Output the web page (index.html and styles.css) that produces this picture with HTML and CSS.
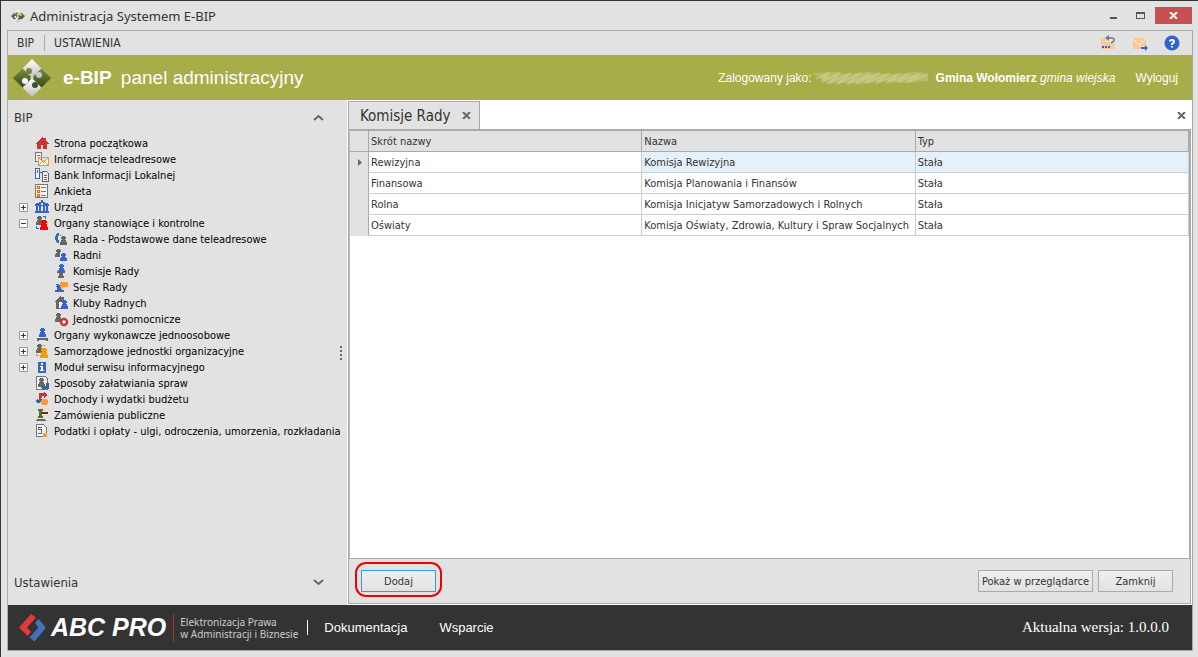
FILE: index.html
```html
<!DOCTYPE html>
<html lang="pl">
  <head>
    <meta charset="UTF-8" />
    <meta name="viewport" content="width=device-width, initial-scale=1.0" />
    <title>Administracja Systemem E-BIP</title>
    <link rel="stylesheet" href="styles.css">
  </head>
  <body>
    <!-- shared icon shapes -->
    <svg class="sprite" aria-hidden="true">
      <defs>
        <linearGradient id="g-silver" gradientUnits="userSpaceOnUse" x1="0" y1="0" x2="0" y2="19" spreadMethod="repeat">
          <stop offset="0" stop-color="#fff" />
          <stop offset="1" stop-color="#bdbdbd" />
        </linearGradient>
        <linearGradient id="g-olive" gradientUnits="userSpaceOnUse" x1="0" y1="9" x2="0" y2="29">
          <stop offset="0" stop-color="#7d8f45" />
          <stop offset="1" stop-color="#36451a" />
        </linearGradient>
      </defs>
      <symbol id="puzzle" viewBox="0 0 38 38">
        <path fill="url(#g-silver)" d="M19 0l9.500 9.500L9.500 28.500 19 38l9.500-9.500L9.500 9.500z" />
        <path fill="url(#g-olive)" d="M0 19l9.500-9.500 19 19L38 19l-9.500-9.500-19 19z" />
        <circle cx="16" cy="12" r="3" fill="url(#g-olive)" />
        <circle cx="26" cy="16" r="3" fill="url(#g-silver)" />
        <circle cx="22" cy="26" r="3" fill="url(#g-olive)" />
        <circle cx="12" cy="22" r="3" fill="url(#g-silver)" />
        <circle cx="19" cy="19" r="1.500" fill="#dcdcdc" />
      </symbol>
      <symbol id="pawn" viewBox="0 0 7 9">
        <path d="M2 0h3v1h1v2H5v1h1v2h1v3H0V6h1V4h1V3H1V1h1z" />
      </symbol>
      <symbol id="close" viewBox="0 0 9 7">
        <path fill="none" stroke="currentColor" stroke-width="2" d="M1 0l7 7M8 0L1 7" />
      </symbol>
    </svg>

    <div class="b-window">
      <header class="b-titlebar">
        <svg class="b-titlebar__icon"><use href="#puzzle" /></svg>
        <span class="b-titlebar__text">Administracja Systemem E-BIP</span>
        <button class="b-titlebar__button" type="button" aria-label="Minimalizuj">
          <svg width="7" height="9" viewBox="0 0 7 9"><path fill="#555" d="M0 6h7v2H0z" /></svg>
        </button>
        <button class="b-titlebar__button" type="button" aria-label="Maksymalizuj">
          <svg width="9" height="7" viewBox="0 0 9 7"><path fill="#555" fill-rule="evenodd" d="M0 0h9v7H0zM1 2v4h7V2z" /></svg>
        </button>
        <button class="b-titlebar__button b-titlebar__button_close" type="button" aria-label="Zamknij okno">
          <svg width="9" height="7"><use href="#close" /></svg>
        </button>
      </header>

      <div class="b-frame">
        <nav class="b-menu">
          <a class="b-menu__link" href="#">BIP</a>
          <a class="b-menu__link" href="#">USTAWIENIA</a>
          <div class="b-menu__tools">
            <button class="b-menu__tool" type="button" aria-label="Cofnij">
              <svg width="16" height="16" viewBox="0 0 16 16"><path fill="#ffc896" d="M1 3h4v4h4v2h6v5H1z" /><path fill="#ffc896" d="M5 7h5v3H5z" /><path fill="#2d65d0" d="M2 11h2v2H2zM5 11h2v2H5zM8 11h2v2H8z" /><path fill="none" stroke="#777" stroke-width="1.500" d="M7 3h5q2 0 2 2t-3 3" /><path fill="#777" d="M5 3l4-3v6z" /></svg>
            </button>
            <button class="b-menu__tool" type="button" aria-label="Wyślij wiadomość">
              <svg width="16" height="16" viewBox="0 0 16 16"><path fill="#ffc896" d="M1 3h13v11H1z" /><path fill="none" stroke="#f4f4f4" d="M1 4l6 6 7-6" /><path fill="#e2e2e2" d="M9 11h6v4H9z" /><path fill="#2d65d0" d="M9 12h4v-2l3 3-3 3v-2H9z" /></svg>
            </button>
            <button class="b-menu__tool" type="button" aria-label="Pomoc">
              <svg width="16" height="16" viewBox="0 0 16 16"><circle cx="8" cy="8" r="7.500" fill="#2d65d0" /><path fill="none" stroke="#fff" stroke-width="2" d="M6 6.500V6q0-1 2-1t2 1.500T8 9v1" /><path fill="#fff" d="M7 11h2v1.500H7z" /></svg>
            </button>
          </div>
        </nav>

        <div class="b-header">
          <svg class="b-header__logo"><use href="#puzzle" /></svg>
          <h1 class="b-header__title"><b>e-BIP</b> <span>panel administracyjny</span></h1>
          <p class="b-header__user">Zalogowany jako:</p>
          <!-- user name is blurred out -->
          <svg class="b-header__mask" viewBox="0 0 116 16">
            <path fill="#c9cd8d" fill-opacity=".45" d="M0 3l20-1 18 2 18-2 24 2 22-2 14 1v8l-24 2-20-2-22 3-20-1-14 1z" />
            <path fill="none" stroke="#dfe2b8" stroke-width="2" stroke-opacity=".35" d="M4 9L17 3 9 12 28 3 17 13 39 3 25 14 49 3 35 14 58 4 44 13 68 3 53 13 77 4 64 13 88 4 74 13 98 4 85 12 108 4 95 12 115 5" />
          </svg>
          <p class="b-header__unit"><b>Gmina Wołomierz</b> <i>gmina wiejska</i></p>
          <a class="b-header__logout" href="#">Wyloguj</a>
        </div>

        <div class="b-content">
          <aside class="b-sidebar">
            <button class="b-sidebar__group" type="button">BIP
              <svg width="11" height="7" viewBox="0 0 11 7"><path fill="none" stroke="#666" stroke-width="2" d="M1 6l4.500-4L10 6" /></svg>
            </button>
            <ul class="b-tree">
              <li class="b-tree__item">
                <svg class="b-tree__icon" viewBox="0 0 16 16"><path fill="#cc3333" d="M8 2l2 2V3h2v3l3 3h-2v5H9v-4H7v4H3V9H1z" /></svg>
                <a href="#">Strona początkowa</a>
              </li>
              <li class="b-tree__item">
                <svg class="b-tree__icon" viewBox="0 0 16 16"><path fill="#f2f2f2" stroke="#777" d="M1.500 1.500h6v9h-6z" /><path stroke="#777" d="M3 4.500h3" /><path fill="#fff" stroke="#f79433" d="M4.500 6.500h10v8h-10zM5 7l4.500 4L14 7M5 14l3-3M14 14l-3-3" /></svg>
                <a href="#">Informacje teleadresowe</a>
              </li>
              <li class="b-tree__item">
                <svg class="b-tree__icon" viewBox="0 0 16 16"><path fill="#f2f2f2" stroke="#3b6c96" d="M1.500 1.500h4v10h-4zM6 5.500h3M3.500 3v3" /><path fill="#f2f2f2" stroke="#666" d="M8.500 14.500v-10h4l2 2v8zM10 8.500h3M10 10.500h3M10 12.500h3" /></svg>
                <a href="#">Bank Informacji Lokalnej</a>
              </li>
              <li class="b-tree__item">
                <svg class="b-tree__icon" viewBox="0 0 16 16"><path fill="#f4f4f4" stroke="#777" d="M1.500 1.500h12v13h-12z" /><path fill="#fff" stroke="#cc6a1a" d="M3.500 3.500h2v2h-2zM3.500 7.500h2v2h-2zM3.500 11.500h2v2h-2zM7 4.500h5M7 8.500h5M7 12.500h5" /></svg>
                <a href="#">Ankieta</a>
              </li>
              <li class="b-tree__item">
                <button class="b-tree__toggle" type="button" aria-label="Rozwiń Urząd"><svg width="9" height="9" viewBox="0 0 9 9"><path fill="#fff" stroke="#999" d="M.5.5h8v8h-8z" /><path stroke="#335" d="M2 4.500h5M4.500 2v5" /></svg></button>
                <svg class="b-tree__icon" viewBox="0 0 16 16"><path fill="#3465cc" fill-rule="evenodd" d="M7 1h2v2h2v1h3v1h1v2H1V5h1V4h3V3h2zM7 4v2h2V4zM2 7h2v5H2zM5 7h2v5H5zM9 7h2v5H9zM12 7h2v5h-2zM1 12h14v2H1z" /></svg>
                <a href="#">Urząd</a>
              </li>
              <li class="b-tree__item">
                <button class="b-tree__toggle" type="button" aria-label="Zwiń Organy stanowiące i kontrolne"><svg width="9" height="9" viewBox="0 0 9 9"><path fill="#fff" stroke="#999" d="M.5.5h8v8h-8z" /><path stroke="#335" d="M2 4.500h5" /></svg></button>
                <svg class="b-tree__icon" viewBox="0 0 16 16"><use href="#pawn" x="2" y="1" width="7" height="9" fill="#666" /><path fill="#3465cc" d="M9 1h3v1H9zM11 2h1v2h-1zM2 11h1v2h2v1H2z" /><use href="#pawn" x="6" y="5" width="8" height="10" fill="#f00" /></svg>
                <a href="#">Organy stanowiące i kontrolne</a>
              </li>
              <li class="b-tree__item b-tree__item_nested">
                <svg class="b-tree__icon" viewBox="0 0 16 16"><path fill="#3b6c96" d="M4 2h2v3H5v4h1v3H4v-1H3V9H2V5h1V3h1z" /><path fill="#6f94b5" d="M7 3h1v2H7z" /><use href="#pawn" x="7" y="5" width="7" height="9" fill="#666" /></svg>
                <a href="#">Rada - Podstawowe dane teleadresowe</a>
              </li>
              <li class="b-tree__item b-tree__item_nested">
                <svg class="b-tree__icon" viewBox="0 0 16 16"><use href="#pawn" x="2" y="2" width="7" height="8" fill="#666" /><use href="#pawn" x="7" y="6" width="7" height="9" fill="#e2e2e2" stroke="#e2e2e2" stroke-width="2" /><use href="#pawn" x="7" y="6" width="7" height="8" fill="#3465cc" /></svg>
                <a href="#">Radni</a>
              </li>
              <li class="b-tree__item b-tree__item_nested">
                <svg class="b-tree__icon" viewBox="0 0 16 16"><use href="#pawn" x="4" y="1" width="8" height="9" fill="#3465cc" /><path fill="#666" d="M4 8h8v2h-2v3h1v2H5v-2h1v-3H4z" /></svg>
                <a href="#">Komisje Rady</a>
              </li>
              <li class="b-tree__item b-tree__item_nested">
                <svg class="b-tree__icon" viewBox="0 0 16 16"><path fill="#3465cc" d="M3 5h3v1h1v2h1v2h1v1h2v2H2v-2h2V9L2 7h2z" /><path fill="#ff9933" d="M7 3h8v5h-5v2H9V8H7z" /></svg>
                <a href="#">Sesje Rady</a>
              </li>
              <li class="b-tree__item b-tree__item_nested">
                <svg class="b-tree__icon" viewBox="0 0 16 16"><path fill="#666" d="M7 1l2 2V2h2v5H8v7H3V7H1z" /><path fill="#fff" d="M6 7h2v6H6z" /><use href="#pawn" x="8" y="5" width="7" height="9" fill="#3465cc" /></svg>
                <a href="#">Kluby Radnych</a>
              </li>
              <li class="b-tree__item b-tree__item_nested">
                <svg class="b-tree__icon" viewBox="0 0 16 16"><use href="#pawn" x="2" y="2" width="7" height="9" fill="#666" /><circle cx="11" cy="11" r="3" fill="#fff" stroke="#cc3333" stroke-width="2.500" shape-rendering="auto" /></svg>
                <a href="#">Jednostki pomocnicze</a>
              </li>
              <li class="b-tree__item">
                <button class="b-tree__toggle" type="button" aria-label="Rozwiń Organy wykonawcze jednoosobowe"><svg width="9" height="9" viewBox="0 0 9 9"><path fill="#fff" stroke="#999" d="M.5.5h8v8h-8z" /><path stroke="#335" d="M2 4.500h5M4.500 2v5" /></svg></button>
                <svg class="b-tree__icon" viewBox="0 0 16 16"><use href="#pawn" x="4" y="1" width="8" height="9" fill="#3465cc" /><path fill="#666" d="M3 11h11v3h-2v-1H5v1H3z" /></svg>
                <a href="#">Organy wykonawcze jednoosobowe</a>
              </li>
              <li class="b-tree__item">
                <button class="b-tree__toggle" type="button" aria-label="Rozwiń Samorządowe jednostki organizacyjne"><svg width="9" height="9" viewBox="0 0 9 9"><path fill="#fff" stroke="#999" d="M.5.5h8v8h-8z" /><path stroke="#335" d="M2 4.500h5M4.500 2v5" /></svg></button>
                <svg class="b-tree__icon" viewBox="0 0 16 16"><use href="#pawn" x="2" y="1" width="7" height="9" fill="#666" /><path fill="#ff9900" d="M9 2h2v1H9zM2 11h1v1h2v1H2z" /><use href="#pawn" x="6" y="5" width="8" height="10" fill="#ff9900" /></svg>
                <a href="#">Samorządowe jednostki organizacyjne</a>
              </li>
              <li class="b-tree__item">
                <button class="b-tree__toggle" type="button" aria-label="Rozwiń Moduł serwisu informacyjnego"><svg width="9" height="9" viewBox="0 0 9 9"><path fill="#fff" stroke="#999" d="M.5.5h8v8h-8z" /><path stroke="#335" d="M2 4.500h5M4.500 2v5" /></svg></button>
                <svg class="b-tree__icon" viewBox="0 0 16 16"><path fill="#3465cc" d="M4 3h8v11H4z" /><path fill="#fff" d="M7 4h2v2H7zM6 7h3v4h1v1H6v-1h1V8H6z" /></svg>
                <a href="#">Moduł serwisu informacyjnego</a>
              </li>
              <li class="b-tree__item">
                <svg class="b-tree__icon" viewBox="0 0 16 16"><path fill="#f4f4f4" stroke="#777" d="M2.500 1.500h9l2 2v11h-11z" /><use href="#pawn" x="4" y="3" width="7" height="9" fill="#666" /><path fill="#336699" d="M7 12l3-3v2h2V8h3v6h-5v2z" /></svg>
                <a href="#">Sposoby załatwiania spraw</a>
              </li>
              <li class="b-tree__item">
                <svg class="b-tree__icon" viewBox="0 0 16 16"><path fill="#cc3333" d="M5 2h5V1l3 3-3 3V5H8v2H7v2H5z" /><path fill="#336699" d="M1 10l3-3v2h2V8h2v3H6v1H4v1z" /><circle cx="10.500" cy="11" r="3.500" fill="#ff9933" /></svg>
                <a href="#">Dochody i wydatki budżetu</a>
              </li>
              <li class="b-tree__item">
                <svg class="b-tree__icon" viewBox="0 0 16 16"><path fill="#66662f" d="M4 2h5v2H8v5h1v2H4V9h1V4H4z" /><path fill="#663300" d="M8 5h6v2H8z" /><path fill="#666" d="M3 12h8v1h1v1H2v-1h1z" /></svg>
                <a href="#">Zamówienia publiczne</a>
              </li>
              <li class="b-tree__item">
                <svg class="b-tree__icon" viewBox="0 0 16 16"><path fill="#f4f4f4" stroke="#777" d="M2.500 1.500h7l3 3v9h-10z" /><path fill="none" stroke="#666" d="M8 4.500H4.500v2h3v4H4" /><circle cx="11" cy="12" r="2.500" fill="#ff9933" /></svg>
                <a href="#">Podatki i opłaty - ulgi, odroczenia, umorzenia, rozkładania</a>
              </li>
            </ul>
            <button class="b-sidebar__group b-sidebar__group_bottom" type="button">Ustawienia
              <svg width="11" height="7" viewBox="0 0 11 7"><path fill="none" stroke="#666" stroke-width="2" d="M1 1l4.500 4L10 1" /></svg>
            </button>
            <span class="b-sidebar__grip"></span>
          </aside>

          <main class="b-panel">
            <div class="b-tabs">
              <div class="b-tab">
                <span>Komisje Rady</span>
                <button class="b-tab__close" type="button" aria-label="Zamknij kartę"><svg width="9" height="7"><use href="#close" /></svg></button>
              </div>
              <button class="b-tabs__close" type="button" aria-label="Zamknij panel"><svg width="9" height="7"><use href="#close" /></svg></button>
            </div>
            <div class="b-page">
              <div class="b-grid">
                <table class="b-table">
                  <thead>
                    <tr><th class="b-table__marker"></th><th>Skrót nazwy</th><th>Nazwa</th><th>Typ</th></tr>
                  </thead>
                  <tbody>
                    <tr class="b-table__row_active">
                      <td class="b-table__marker"><svg width="4" height="7" viewBox="0 0 4 7"><path fill="#666" d="M0 0l4 3.500L0 7z" /></svg></td>
                      <td>Rewizyjna</td><td>Komisja Rewizyjna</td><td>Stała</td>
                    </tr>
                    <tr><td class="b-table__marker"></td><td>Finansowa</td><td>Komisja Planowania i Finansów</td><td>Stała</td></tr>
                    <tr><td class="b-table__marker"></td><td>Rolna</td><td>Komisja Inicjatyw Samorzadowych i Rolnych</td><td>Stała</td></tr>
                    <tr><td class="b-table__marker"></td><td>Oświaty</td><td>Komisja Oświaty, Zdrowia, Kultury i Spraw Socjalnych</td><td>Stała</td></tr>
                  </tbody>
                </table>
              </div>
              <div class="b-actions">
                <div class="b-actions__marked">
                  <button class="b-button b-button_focus" type="button">Dodaj</button>
                </div>
                <button class="b-button b-button_wide" type="button">Pokaż w przeglądarce</button>
                <button class="b-button" type="button">Zamknij</button>
              </div>
            </div>
          </main>
        </div>

        <footer class="b-footer">
          <svg width="27" height="28" viewBox="0 0 27 28">
            <path fill="#e03a3a" d="M0 13.500L12 0l5 3.500-9 10 4 4.500-3.500 4z" />
            <path fill="#4472b8" d="M27 13.500L19.500 5 16 9l3.500 4.500-9 10 5 4z" />
          </svg>
          <strong class="b-footer__brand">ABC PRO</strong>
          <p class="b-footer__slogan">Elektronizacja Prawa<br>w Administracji i Biznesie</p>
          <nav class="b-footer__nav">
            <a href="#">Dokumentacja</a>
            <a href="#">Wsparcie</a>
          </nav>
          <p class="b-footer__version">Aktualna wersja: 1.0.0.0</p>
        </footer>
      </div>
    </div>
  </body>
</html>
```

FILE: styles.css
```css
* {
  box-sizing: border-box;
}

body {
  margin: 0;
  font-family: "DejaVu Sans Condensed", "DejaVu Sans", sans-serif;
  font-size: 11px;
  color: #333;
}

p, h1, ul {
  margin: 0;
  padding: 0;
}

button {
  padding: 0;
  border: none;
  background: none;
  color: inherit;
  font: inherit;
}

a {
  color: inherit;
  text-decoration: none;
}

svg {
  display: block;
  flex: none;
}

.sprite {
  position: absolute;
  width: 0;
  height: 0;
}

.b-window {
  display: flex;
  flex-direction: column;
  min-height: 100vh;
  padding: 0 5px 6px 6px;
  border-top: 1px solid #333;
  border-left: 1px solid #333;
  background: #e2e2e2;
}

.b-titlebar {
  display: flex;
  align-items: center;
  height: 29px;
  padding: 0 1px 0 4px;
  font-family: "Noto Sans", sans-serif;
  font-size: 13px;
}

.b-titlebar__icon {
  width: 14px;
  height: 14px;
  margin-right: 5px;
}

.b-titlebar__text {
  flex: 1;
}

.b-titlebar__button {
  display: flex;
  align-items: center;
  justify-content: center;
  width: 27px;
  height: 17px;
}

.b-titlebar__button_close {
  width: 37px;
  margin-left: 1px;
  background: #c75050;
  color: #fff;
}

.b-frame {
  display: flex;
  flex: 1;
  flex-direction: column;
  border: 1px solid #aaa;
}

.b-menu {
  display: flex;
  align-items: center;
  height: 24px;
  padding-right: 12px;
  font-size: 12px;
}

.b-menu__link {
  padding: 0 10px 0 9px;
  line-height: 16px;
}

.b-menu__link + .b-menu__link {
  border-left: 1px solid #aaa;
}

.b-menu__tools {
  display: flex;
  gap: 16px;
  margin-left: auto;
}

.b-header {
  display: flex;
  align-items: center;
  height: 45px;
  padding: 0 14px 0 5px;
  background: #a6ad49;
  color: #fff;
  font-family: "Liberation Sans", sans-serif;
  font-size: 12px;
}

.b-header__logo {
  width: 38px;
  height: 38px;
}

.b-header__title {
  margin-left: 12px;
  font-size: 19px;
  font-weight: normal;
}

.b-header__title span {
  margin-left: 4px;
}

.b-header__user {
  margin-left: auto;
}

.b-header__mask {
  width: 116px;
  height: 16px;
}

.b-header__unit {
  margin-left: 8px;
}

.b-header__logout {
  margin-left: 20px;
}

.b-content {
  display: flex;
  flex: 1;
}

.b-sidebar {
  position: relative;
  display: flex;
  flex-direction: column;
  flex: none;
  width: 340px;
  border-right: 1px solid #fff;
}

.b-sidebar__group {
  display: flex;
  align-items: center;
  justify-content: space-between;
  height: 35px;
  padding: 0 23px 0 6px;
  font-size: 13px;
}

.b-sidebar__group_bottom {
  height: 46px;
  margin-top: auto;
}

.b-sidebar__grip {
  position: absolute;
  top: 50%;
  right: 5px;
  width: 2px;
  height: 14px;
  margin-top: -7px;
  background: repeating-linear-gradient(#666 0 2px, transparent 2px 4px);
}

.b-tree {
  color: #000;
  list-style: none;
}

.b-tree__item {
  display: flex;
  align-items: center;
  height: 16px;
  padding-left: 26px;
  white-space: nowrap;
}

.b-tree__item_nested {
  padding-left: 45px;
}

.b-tree__icon {
  width: 16px;
  height: 16px;
  margin-right: 4px;
  shape-rendering: crispEdges;
}

.b-tree__toggle {
  margin: 0 6px 0 -15px;
}

.b-panel {
  display: flex;
  flex: 1;
  flex-direction: column;
  min-width: 0;
  padding: 1px 1px 1px 0;
  background: #fff;
}

.b-tabs {
  display: flex;
  align-items: center;
  justify-content: space-between;
  height: 28px;
  padding-right: 5px;
  color: #666;
}

.b-tab {
  display: flex;
  align-items: center;
  gap: 11px;
  height: 28px;
  padding: 0 8px 0 11px;
  border: 1px solid #aaa;
  border-bottom: none;
  background: #e2e2e2;
  color: #333;
  font-size: 15px;
}

.b-tab__close {
  color: #666;
}

.b-page {
  display: flex;
  flex: 1;
  flex-direction: column;
  border: 1px solid #aaa;
}

.b-grid {
  flex: 1;
  border: 1px solid #aaa;
  border-left-color: #bbb;
}

.b-table {
  width: 100%;
  border-spacing: 0;
  table-layout: fixed;
}

.b-table th,
.b-table td {
  height: 21px;
  padding: 0 2px;
  border-right: 1px solid #ccc;
  border-bottom: 1px solid #ccc;
  font-weight: normal;
  text-align: left;
  white-space: nowrap;
}

.b-table th {
  border-color: #aaa;
  background: #e2e2e2;
}

.b-table .b-table__marker {
  width: 19px;
  padding-left: 8px;
  border-right-color: #aaa;
  background: #e2e2e2;
}

.b-table td.b-table__marker {
  border-bottom-color: #e2e2e2;
}

.b-table__row_active td:nth-child(n + 3) {
  background: #e4f0fa;
}

.b-actions {
  display: flex;
  align-items: center;
  gap: 5px;
  height: 44px;
  padding: 0 17px 0 12px;
  background: #e2e2e2;
}

.b-actions__marked {
  position: relative;
  margin-right: auto;
}

/* red ring around the add button */
.b-actions__marked::after {
  content: "";
  position: absolute;
  inset: -8px -6px -5px;
  border: 2px solid #f00000;
  border-radius: 11px;
  pointer-events: none;
}

.b-button {
  display: block;
  width: 75px;
  height: 22px;
  border: 1px solid #aaa;
  background: linear-gradient(#efefef, #e2e2e2);
}

.b-button_wide {
  width: 115px;
}

.b-button_focus {
  border-color: #3399ff;
}

.b-footer {
  display: flex;
  align-items: center;
  height: 45px;
  padding: 0 23px 0 11px;
  background: #333;
  color: #fff;
}

.b-footer__brand {
  margin-left: 5px;
  font: italic bold 25px "Liberation Sans", sans-serif;
}

.b-footer__slogan {
  margin-left: 7px;
  padding: 2px 0 2px 6px;
  border-left: 1px solid #a33;
  color: #ccc;
  font: 10px/12px "Noto Sans", sans-serif;
}

.b-footer__nav {
  display: flex;
  gap: 32px;
  margin-left: 9px;
  padding-left: 16px;
  border-left: 1px solid #fff;
  font: 13px "Liberation Sans", sans-serif;
}

.b-footer__version {
  margin-left: auto;
  font: 15px "Liberation Serif", serif;
}
```
